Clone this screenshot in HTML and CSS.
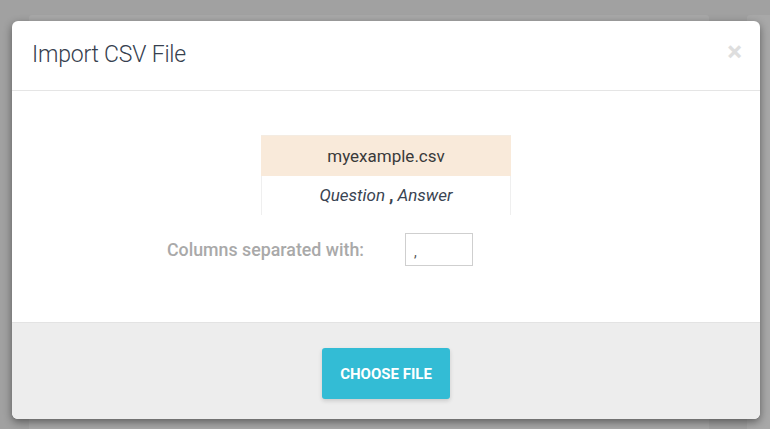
FILE: index.html
```html
<!DOCTYPE html>
<html>
<head>
<meta charset="utf-8">
<link rel="stylesheet" href="styles.css">
</head>
<body>
<div class="page">
  <div class="bg-card"></div>
  <div class="bg-side"></div>
</div>
<div class="modal">
  <div class="modal-header">
    <h4 class="modal-title">Import CSV File</h4>
    <span class="close">×</span>
  </div>
  <div class="modal-body">
    <div class="sample">
      <div class="sample-head">myexample.csv</div>
      <div class="sample-row"><em>Question</em><b class="sep">,</b><em>Answer</em></div>
    </div>
    <div class="form-row">
      <label class="form-label">Columns separated with:</label>
      <div class="form-input">,</div>
    </div>
  </div>
  <div class="modal-footer">
    <button class="btn">CHOOSE FILE</button>
  </div>
</div>
</body>
</html>
```
FILE: styles.css
```css
html, body {
  margin: 0;
  padding: 0;
  width: 770px;
  height: 429px;
  overflow: hidden;
  background: #a1a1a1;
  font-family: Roboto, "Noto Sans", sans-serif;
}
.page {
  display: flex;
  gap: 38px;
  padding: 15px 0 0 29px;
  height: 414px;
}
.bg-card {
  width: 680px;
  background: #a8a8a8;
  border-radius: 3px 3px 0 0;
}
.bg-side {
  flex: 1;
  background: #a8a8a8;
  border-radius: 3px 0 0 0;
}
.modal {
  position: absolute;
  left: 12px;
  top: 21px;
  width: 748px;
  height: 398px;
  background: #fff;
  border-radius: 6px;
  box-shadow: 0 3px 9px rgba(0,0,0,0.45);
  display: flex;
  flex-direction: column;
  overflow: hidden;
}
.modal-header {
  height: 70px;
  border-bottom: 1px solid #e5e5e5;
  display: flex;
  align-items: center;
  justify-content: space-between;
  padding: 0 18px 0 20px;
  box-sizing: border-box;
}
.modal-title {
  margin: 0;
  font-size: 23px;
  font-weight: 300;
  color: #36404e;
  padding-bottom: 2px;
  letter-spacing: -0.2px;
}
.close {
  font-size: 28px;
  font-weight: 700;
  color: #dedede;
  line-height: 1;
  padding-bottom: 8px;
}
.modal-body {
  flex: 1;
  display: flex;
  flex-direction: column;
  align-items: center;
  padding-top: 44px;
  box-sizing: border-box;
}
.sample {
  width: 250px;
  text-align: center;
}
.sample-head {
  height: 40px;
  line-height: 40px;
  background: #f9eada;
  color: #3a3a3a;
  font-size: 17px;
  border-top: 1px solid #f4ece2;
}
.sample-row {
  height: 39px;
  line-height: 38px;
  border-left: 1px solid #efefef;
  border-right: 1px solid #efefef;
  color: #3a4452;
  font-size: 17px;
}
.sep {
  font-weight: 700;
  margin: 0 4px 0 4px;
  font-size: 18px;
}
.form-row {
  align-self: stretch;
  display: flex;
  align-items: center;
  margin-top: 18px;
  padding-left: 155px;
}
.form-label {
  font-size: 17.8px;
  font-weight: 500;
  color: #a9a9a9;
  width: 238px;
  white-space: nowrap;
}
.form-input {
  height: 31px;
  border: 1px solid #cfcfcf;
  font-size: 14px;
  color: #555;
  line-height: 36px;
  padding-left: 8px;
  box-sizing: content-box;
  width: 58px;
}
.modal-footer {
  height: 97px;
  border-top: 1px solid #e3e3e3;
  background: #ededed;
  display: flex;
  justify-content: center;
  padding-top: 25px;
  box-sizing: border-box;
}
.btn {
  width: 128px;
  height: 51px;
  border: none;
  border-radius: 3px;
  background: #33bcd5;
  color: #fff;
  font-family: Roboto, "Noto Sans", sans-serif;
  font-size: 15px;
  font-weight: 700;
  box-shadow: 0 2px 4px rgba(0,0,0,0.15);
  padding: 0;
}
```
